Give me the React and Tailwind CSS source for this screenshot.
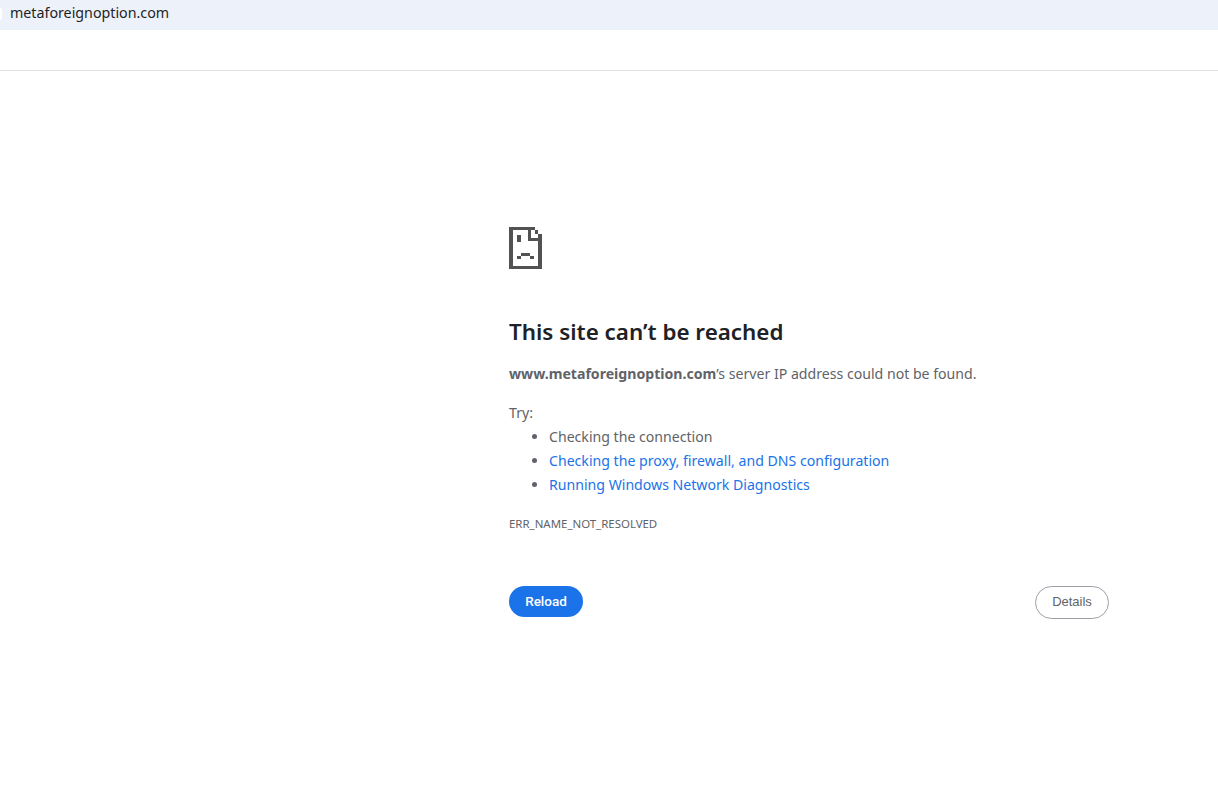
import React from "react";

const font = "font-['Noto_Sans','Open_Sans',sans-serif]";

function SadFile() {
  return (
    <svg width="33" height="42" viewBox="0 0 33 42" shapeRendering="crispEdges" fill="#525252">
      <rect x="0" y="0" width="4" height="42" />
      <rect x="0" y="0" width="26" height="3" />
      <rect x="0" y="39" width="33" height="3" />
      <rect x="29" y="7" width="4" height="35" />
      <rect x="19" y="0" width="3" height="14" />
      <rect x="19" y="11" width="14" height="3" />
      <rect x="26" y="3" width="3" height="4" />
      <rect x="8" y="8" width="4" height="7" />
      <rect x="8" y="29" width="4" height="3" />
      <rect x="12" y="26" width="9" height="3" />
      <rect x="21" y="29" width="4" height="3" />
    </svg>
  );
}

export default function App() {
  return (
    <div className={`h-[801px] bg-white overflow-hidden ${font}`}>
      <div className="relative h-[30px] bg-[#ecf1fa] pl-[10px] text-[14.25px] leading-[26px] text-[#1f1f1f]">
        <div className="absolute left-0 top-[8px] h-[12px] w-[2px] rounded-r-full bg-white" />
        metaforeignoption.com
      </div>
      <div className="h-[41px] border-b border-[#e3e3e3]" />

      <main className="ml-[509px] w-[600px] pt-[156px]">
        <SadFile />
        <h1 className="mt-[46px] text-[22.4px] leading-[34px] font-semibold text-[#202124]">
          This site can’t be reached
        </h1>
        <p className="mt-[13px] text-[14.12px] leading-[24px] text-[#5f6368]">
          <strong className="font-bold">www.metaforeignoption.com</strong>’s server IP address could not be found.
        </p>
        <p className="mt-[15px] text-[14.12px] leading-[24px] text-[#5f6368]">Try:</p>
        <ul className="list-disc pl-[40px] text-[14.12px] leading-[24px] text-[#5f6368] marker:text-[#5f6368]">
          <li>Checking the connection</li>
          <li className="text-[#1a73e8]">Checking the proxy, firewall, and DNS configuration</li>
          <li className="text-[#1a73e8]">Running Windows Network Diagnostics</li>
        </ul>
        <div className="mt-[19px] text-[11.45px] leading-[16px] text-[#5f6368]">ERR_NAME_NOT_RESOLVED</div>

        <div className="mt-[54px] flex items-start justify-between">
          <button className="h-[31px] w-[74px] rounded-full bg-[#1a73e8] font-['Roboto',sans-serif] text-[13.5px] font-medium text-white">
            Reload
          </button>
          <button className="h-[33px] w-[74px] rounded-full border border-[#9aa0a6] bg-white pb-px font-['Liberation_Sans',sans-serif] text-[13px] text-[#5f6368]">
            Details
          </button>
        </div>
      </main>
    </div>
  );
}
